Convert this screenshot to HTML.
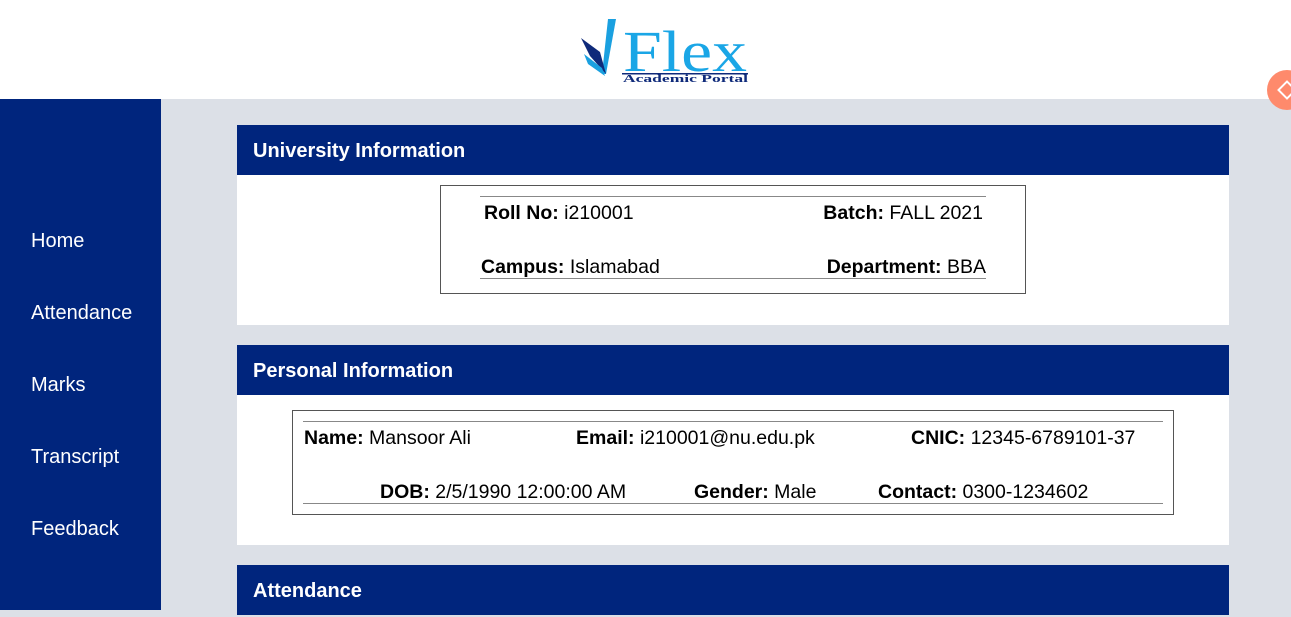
<!DOCTYPE html>
<html><head><meta charset="utf-8"><style>
body{margin:0;width:1291px;height:610px;overflow:hidden;background:#dce0e7;font-family:"Liberation Sans",sans-serif;position:relative}
.a{position:absolute}
.hdr{left:0;top:0;width:1291px;height:99px;background:#fff}
.side{left:0;top:99px;width:161px;height:511px;background:#00257d}
.side div{position:absolute;left:31px;color:#fff;font-size:20px}
.card{left:237px;width:992px;background:#fff}
.ch{left:237px;width:992px;height:50px;background:#00257d;color:#fff;font-weight:bold;font-size:20px;line-height:52px;text-indent:16px}
.t{font-size:19.5px;color:#000;white-space:nowrap;line-height:20px}
.t b{font-weight:bold}
.ln{height:1px;background:#888}
.box{border:1px solid #555}
</style></head><body>
<div class="a hdr"></div>
<svg class="a" style="left:578px;top:16px" width="175" height="70" viewBox="0 0 175 70">
<path d="M30 3 L38 3 L28 58 L24 58 Z" fill="#1aa0e0"/>
<path d="M3 22 L22 36 L28 58 L12 40 Z" fill="#0f2a7a"/>
<path d="M6 38 L24 52 L27 60 L10 48 Z" fill="#1aa0e0"/>
<text x="45" y="55" font-family="Liberation Serif,serif" font-size="58" fill="#1aa6e6" textLength="124" lengthAdjust="spacingAndGlyphs">Flex</text>
<rect x="44" y="57" width="126" height="1.5" fill="#0f2a7a"/>
<text x="45" y="66" font-family="Liberation Serif,serif" font-weight="bold" font-size="10" fill="#0f2a7a" textLength="125" lengthAdjust="spacingAndGlyphs">Academic Portal</text>
</svg>
<div class="a" style="left:1267px;top:70px;width:40px;height:40px;border-radius:50%;background:#fe8a6c"></div>
<div class="a" style="left:1280px;top:83px;width:10px;height:10px;border:2px solid #fff;transform:rotate(45deg)"></div>
<div class="a side">
<div style="top:131px">Home</div>
<div style="top:203px">Attendance</div>
<div style="top:275px">Marks</div>
<div style="top:347px">Transcript</div>
<div style="top:419px">Feedback</div>
</div>
<div class="a card" style="top:125px;height:200px"></div>
<div class="a ch" style="top:125px">University Information</div>
<div class="a box" style="left:440px;top:185px;width:584px;height:107px"></div>
<div class="a ln" style="left:480px;top:196px;width:506px"></div>
<div class="a ln" style="left:480px;top:278px;width:506px"></div>
<div class="a t" style="left:484px;top:203px"><b>Roll No:</b> i210001</div>
<div class="a t" style="right:308px;top:203px"><b>Batch:</b> FALL 2021</div>
<div class="a t" style="left:481px;top:257px"><b>Campus:</b> Islamabad</div>
<div class="a t" style="right:305px;top:257px"><b>Department:</b> BBA</div>
<div class="a card" style="top:345px;height:200px"></div>
<div class="a ch" style="top:345px">Personal Information</div>
<div class="a box" style="left:292px;top:410px;width:880px;height:103px"></div>
<div class="a ln" style="left:303px;top:421px;width:860px"></div>
<div class="a ln" style="left:303px;top:503px;width:860px"></div>
<div class="a t" style="left:304px;top:428px"><b>Name:</b> Mansoor Ali</div>
<div class="a t" style="left:576px;top:428px"><b>Email:</b> i210001@nu.edu.pk</div>
<div class="a t" style="left:911px;top:428px"><b>CNIC:</b> 12345-6789101-37</div>
<div class="a t" style="left:380px;top:482px"><b>DOB:</b> 2/5/1990 12:00:00 AM</div>
<div class="a t" style="left:694px;top:482px"><b>Gender:</b> Male</div>
<div class="a t" style="left:878px;top:482px"><b>Contact:</b> 0300-1234602</div>
<div class="a ch" style="top:565px">Attendance</div>
</body></html>
